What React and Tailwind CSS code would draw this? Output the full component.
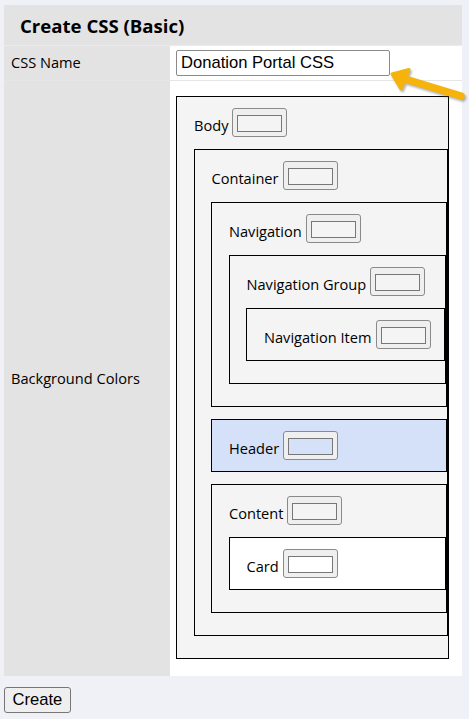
import React from 'react';

const labelFont = { fontFamily: '"Open Sans", "DejaVu Sans", sans-serif' };

const Swatch = ({ fill }) => (
  <span className="inline-flex h-[29px] w-[55px] shrink-0 items-center justify-center rounded-[3px] border border-[#8a8a8a] bg-[#efefef] pt-[2px]">
    <span className={`block h-[17px] w-[45px] border border-[#777777] ${fill}`} />
  </span>
);

// one nested colour box: label + swatch, then its children boxes
const Box = ({ label, bg, fill, children }) => (
  <div className={`border border-black ${bg}`}>
    <div className="flex items-end gap-[4px] pl-[17px] pt-[11px] pb-[11px]">
      <span className="pb-[4px] text-[14.6px] leading-none text-black">{label}</span>
      <Swatch fill={fill} />
    </div>
    {children && (
      <div className="-mt-[11px] flex flex-col gap-3 pl-[16.5px] pt-3 pb-[22px]">
        {children}
      </div>
    )}
  </div>
);

const Arrow = () => (
  <svg
    className="pointer-events-none absolute left-[380px] top-[58px]"
    width="89"
    height="50"
    viewBox="0 0 89 50"
  >
    <defs>
      <filter id="arrowShadow" x="-20%" y="-20%" width="140%" height="160%">
        <feGaussianBlur stdDeviation="1.2" />
      </filter>
    </defs>
    <g transform="translate(1.5 2)" opacity="0.45" filter="url(#arrowShadow)" fill="#555" stroke="#555">
      <line x1="81" y1="38" x2="25" y2="21" strokeWidth="7.5" strokeLinecap="round" />
      <polygon points="12,16 29,11.5 21,31" strokeWidth="3" strokeLinejoin="round" />
    </g>
    <g fill="#f5b30b" stroke="#f5b30b">
      <line x1="81" y1="38" x2="25" y2="21" strokeWidth="7.5" strokeLinecap="round" />
      <polygon points="12,16 29,11.5 21,31" strokeWidth="3" strokeLinejoin="round" />
    </g>
  </svg>
);

export default function App() {
  return (
    <div className="relative min-h-screen bg-[#f0f1f6] pl-[4px] pt-[5px]" style={labelFont}>
      <div className="w-[458px]">
        {/* Header */}
        <div className="flex h-[41px] items-center border-b border-[#ebebeb] bg-[#e3e3e3] pl-[16px]">
          <h1 className="pt-[2px] text-[18.6px] font-bold text-black">Create CSS (Basic)</h1>
        </div>

        {/* CSS Name row */}
        <div className="flex border-b border-[#e6e6e6]">
          <div className="flex w-[166px] items-center bg-[#e3e3e3] pl-[7px] text-[14.6px] text-black">
            CSS Name
          </div>
          <div className="flex-1 bg-white py-[4px] pl-[6px]">
            <input
              type="text"
              defaultValue="Donation Portal CSS"
              className="h-[26px] w-[214px] rounded-[2px] border border-[#8a8a8a] bg-white px-[4px] text-[16.6px] text-black outline-none"
              style={{ fontFamily: '"Liberation Sans", Arial, sans-serif' }}
            />
          </div>
        </div>

        {/* Background colors row */}
        <div className="flex">
          <div className="flex w-[166px] items-center bg-[#e3e3e3] pl-[7px] text-[14.6px] text-black">
            Background Colors
          </div>
          <div className="flex-1 bg-white pb-[17px] pl-[6px] pt-[15px]">
            <div className="w-[273px]">
              <Box label="Body" bg="bg-[#f4f4f4]" fill="bg-[#f4f4f4]">
                <Box label="Container" bg="bg-[#f4f4f4]" fill="bg-[#f4f4f4]">
                  <Box label="Navigation" bg="bg-[#f4f4f4]" fill="bg-[#f4f4f4]">
                    <Box label="Navigation Group" bg="bg-[#f4f4f4]" fill="bg-[#f4f4f4]">
                      <Box label="Navigation Item" bg="bg-[#f4f4f4]" fill="bg-[#f4f4f4]" />
                    </Box>
                  </Box>
                  <Box label="Header" bg="bg-[#d5e1f8]" fill="bg-[#d5e1f8]" />
                  <Box label="Content" bg="bg-[#f4f4f4]" fill="bg-[#f4f4f4]">
                    <Box label="Card" bg="bg-white" fill="bg-white" />
                  </Box>
                </Box>
              </Box>
            </div>
          </div>
        </div>
      </div>

      <div className="pt-[11px] pb-[7px]">
        <button
          type="button"
          className="h-[26px] rounded-[3px] border border-[#767676] bg-[#efefef] px-[7.5px] text-[16.6px] text-black"
          style={{ fontFamily: '"Liberation Sans", Arial, sans-serif' }}
        >
          Create
        </button>
      </div>

      <Arrow />
    </div>
  );
}
